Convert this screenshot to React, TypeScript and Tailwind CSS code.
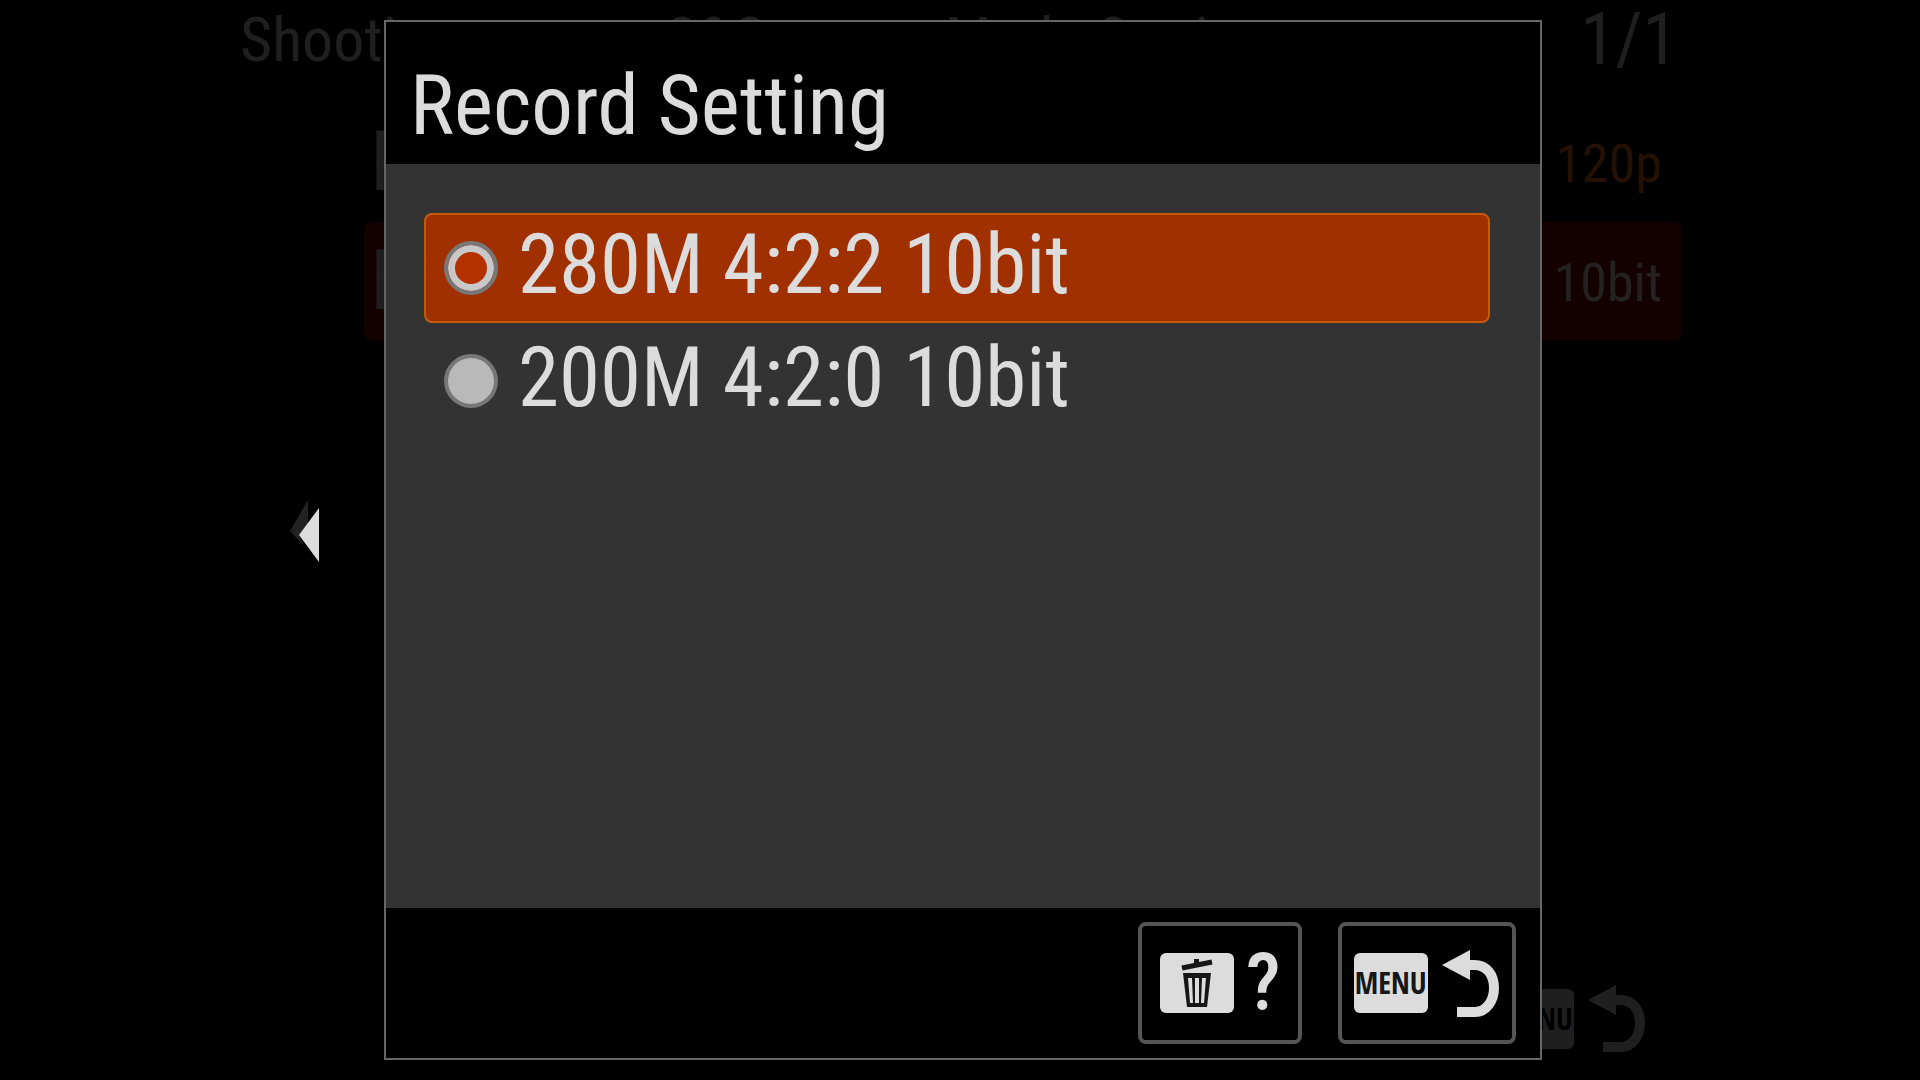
import { useState } from "react";

const OPTIONS = ["280M 4:2:2 10bit", "200M 4:2:0 10bit"];

function BackArrow() {
  return (
    <svg className="h-[67px] w-[57px] shrink-0" viewBox="0 0 57 67" fill="none" aria-hidden="true">
      <path d="M0 15 28 0V30Z" fill="currentColor" />
      <path d="M26 15H32C45 15 52 25 52 38S44 62 33 62H15" stroke="currentColor" strokeWidth="10" />
    </svg>
  );
}

function TrashIcon() {
  return (
    <svg className="h-[50px] w-[34px]" viewBox="0 0 34 50" fill="none" aria-hidden="true">
      <path d="M2 10 32 4" stroke="#161616" strokeWidth="5" />
      <path d="M14 1h5v5h-5z" fill="#161616" />
      <path d="M3 15h28l-4 34H7Z" fill="#161616" />
      <path d="M8 20h4l1 25h-3ZM15 20h4v25h-4ZM22 20h4l-2 25h-3Z" fill="#dcdcdc" />
    </svg>
  );
}

function MenuBadge({ dim }: { dim?: boolean }) {
  return (
    <span
      className={
        "flex h-[60px] w-[74px] shrink-0 items-center justify-center rounded-md font-['Open_Sans_Condensed','Roboto_Condensed',sans-serif] text-[30px] leading-none font-light " +
        (dim ? "bg-[#1f1f1f] text-black" : "bg-[#dcdcdc] text-[#161616]")
      }
    >
      MENU
    </span>
  );
}

/* Menu page that stays dimmed below the dialog */
function DimmedMenu() {
  return (
    <main className="flex min-h-screen flex-col leading-[80px] text-[#1f1f1f]">
      <header className="flex justify-between pr-[242px] pl-[240px]">
        <h1 className="flex text-[62px] whitespace-nowrap">
          <span>Shooting</span>
          <span className="ml-52">S&amp;Q</span>
          <span className="ml-44">Mode Setting</span>
        </h1>
        <span className="text-[72px]">1/1</span>
      </header>
      <div className="mt-[22px] mr-[238px] ml-[364px] text-[54px]">
        <div className="flex h-[120px] items-center justify-between pr-5 pl-1.5">
          <span className="text-[83px]">Rec Frame Rate</span>
          <span className="pt-1 text-[#241104]">120p</span>
        </div>
        <div className="flex h-[118px] items-center justify-between rounded-lg bg-[#140000] pr-5 pl-1.5">
          <span className="text-[83px]">Record Setting</span>
          <span className="pt-1 text-[#242220]">10bit</span>
        </div>
      </div>
      <footer className="mt-auto flex items-center justify-end gap-3.5 pr-[275px] pb-7">
        <MenuBadge dim />
        <BackArrow />
      </footer>
    </main>
  );
}

export default function App() {
  const [selected, setSelected] = useState(OPTIONS[0]);

  return (
    <div className="relative min-h-screen overflow-hidden bg-black font-['Roboto_Condensed','Liberation_Sans',sans-serif]">
      <DimmedMenu />

      <button aria-label="Back" className="absolute top-[500px] left-[290px] h-[63px] w-[29px]">
        <svg className="h-full w-full" viewBox="0 0 29 63" aria-hidden="true">
          <path d="M0 31 18 0V24L9 35 14 46Z" fill="#222" />
          <path d="M9 35 29 8V62Z" fill="#dcdcdc" />
        </svg>
      </button>

      <div className="absolute inset-0 flex py-5 pr-[19.7%] pl-[20%] text-[83px] leading-[96px] text-[#dcdcdc]">
        <section
          role="dialog"
          aria-labelledby="dialog-title"
          className="flex flex-1 flex-col border-2 border-[#666] bg-black"
        >
          <header className="px-6 pt-9 pb-2.5">
            <h2 id="dialog-title">Record Setting</h2>
          </header>

          <div className="flex flex-1 flex-col gap-[3px] bg-[#333] pt-[49px] pr-[50px] pl-[38px]">
            {OPTIONS.map((option) => (
              <label
                key={option}
                className={
                  "flex h-[110px] items-center gap-5 rounded-lg border-2 px-[18px] " +
                  (option === selected ? "border-[#c25a0a] bg-[#a03000]" : "border-transparent")
                }
              >
                <input
                  type="radio"
                  name="record-setting"
                  checked={option === selected}
                  onChange={() => setSelected(option)}
                  className="size-[54px] shrink-0 appearance-none rounded-full border-4 border-[#777] bg-[#b9b9b9] checked:bg-[#b43000] checked:shadow-[inset_0_0_0_7px_#c8c8c8]"
                />
                <span className="pb-1.5">{option}</span>
              </label>
            ))}
          </div>

          <footer className="flex justify-end gap-9 py-3.5 pr-6">
            <button
              aria-label="Help"
              className="flex h-[122px] w-[164px] items-center gap-3 rounded-lg border-4 border-[#555] px-[18px]"
            >
              <span className="flex h-[60px] w-[74px] shrink-0 items-center justify-center rounded-md bg-[#dcdcdc]">
                <TrashIcon />
              </span>
              <span className="text-[80px] font-medium">?</span>
            </button>
            <button className="flex h-[122px] w-[178px] items-center gap-3.5 rounded-lg border-4 border-[#555] px-3">
              <MenuBadge />
              <BackArrow />
            </button>
          </footer>
        </section>
      </div>
    </div>
  );
}
